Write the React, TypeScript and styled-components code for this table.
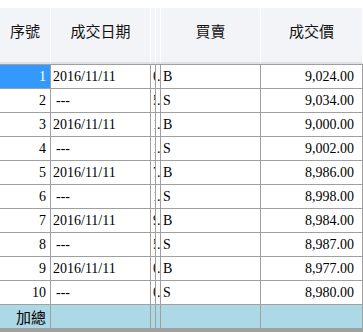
import { createGlobalStyle, styled } from 'styled-components'

const GlobalStyle = createGlobalStyle`
    html, body {
        margin: 0;
        padding: 0;
        background: #ffffff;
    }
    body {
        font-family: "Liberation Serif", "Noto Sans CJK TC", serif;
    }
`

const LINE = '#a0a0a0'
const widths = [51, 100, 5, 5, 100, 102]

const Grid = styled.div`
    width: 363px;
    height: 332px;
    overflow: hidden;
    background: #ffffff;
    border-bottom: 4px solid ${LINE};
    box-sizing: border-box;
`

const HeaderRow = styled.div`
    display: flex;
    height: 65px;
    box-sizing: border-box;
    border-bottom: 1px solid ${LINE};
`

const HeaderCell = styled.div<{ $w: number }>`
    width: ${p => p.$w}px;
    flex: none;
    box-sizing: border-box;
    height: 64px;
    padding-bottom: 2px;
    border-right: 1px solid #ffffff;
    border-bottom: 2px solid #dfe1e5;
    background: linear-gradient(#ffffff 0 8px, #f3f4f7 8px);
    display: flex;
    align-items: center;
    justify-content: center;
    font-family: "Noto Sans CJK TC", "Noto Sans", sans-serif;
    font-size: 15px;
    color: #111111;
    overflow: hidden;
    white-space: nowrap;
`

const Row = styled.div<{ $total?: boolean }>`
    display: flex;
    height: 24px;
    box-sizing: border-box;
    border-bottom: 1px solid ${LINE};
    background: ${p => (p.$total ? '#add8e6' : '#ffffff')};
    &:last-child {
        height: 23px;
        border-bottom: none;
    }
`

const Cell = styled.div<{ $w: number; $align?: 'left' | 'right'; $pad?: number; $selected?: boolean; $cjk?: boolean }>`
    width: ${p => p.$w}px;
    flex: none;
    box-sizing: border-box;
    border-right: 1px solid ${LINE};
    display: flex;
    align-items: center;
    justify-content: ${p => (p.$align === 'right' ? 'flex-end' : 'flex-start')};
    padding: ${p => (p.$align === 'right' ? `0 ${p.$pad ?? 4}px 0 0` : `0 0 0 ${p.$pad ?? 2}px`)};
    overflow: hidden;
    white-space: pre;
    font-family: ${p => (p.$cjk ? '"Noto Sans CJK TC", "Noto Sans", sans-serif' : '"Liberation Serif", "Noto Sans CJK TC", serif')};
    font-size: ${p => (p.$cjk ? 15 : 14)}px;
    color: ${p => (p.$selected ? '#ffffff' : '#000000')};
    background: ${p => (p.$selected ? '#3399ff' : 'transparent')};
`

const headers = ['序號', '成交日期', '', '', '買賣', '成交價']

const prices = ['9,024.00', '9,034.00', '9,000.00', '9,002.00', '8,986.00', '8,998.00', '8,984.00', '8,987.00', '8,977.00', '8,980.00']
const hours = ['0', '5', '1', '1', '7', '1', '9', '5', '0', '0']

const rows = prices.map((price, i) => ({
    no: i + 1,
    date: i % 2 === 0 ? '2016/11/11' : '---',
    hour: hours[i],
    side: i % 2 === 0 ? 'B' : 'S',
    price,
}))

const App = () => {
    return (
        <>
            <GlobalStyle />
            <Grid>
                <HeaderRow>
                    {headers.map((h, i) => (
                        <HeaderCell key={i} $w={widths[i]}>{h}</HeaderCell>
                    ))}
                </HeaderRow>

                {rows.map((r, i) => (
                    <Row key={r.no}>
                        <Cell $w={widths[0]} $align="right" $pad={4} $selected={i === 0}>{r.no}</Cell>
                        <Cell $w={widths[1]} $pad={r.date === '---' ? 5 : 2}>{r.date}</Cell>
                        <Cell $w={widths[2]} $pad={2}>{r.hour}</Cell>
                        <Cell $w={widths[3]} $pad={1}>.</Cell>
                        <Cell $w={widths[4]} $pad={2}>{r.side}</Cell>
                        <Cell $w={widths[5]} $align="right" $pad={8}>{r.price}</Cell>
                    </Row>
                ))}

                <Row $total>
                    <Cell $w={widths[0]} $align="right" $pad={4} $cjk>加總</Cell>
                    <Cell $w={widths[1]} />
                    <Cell $w={widths[2]} />
                    <Cell $w={widths[3]} />
                    <Cell $w={widths[4]} />
                    <Cell $w={widths[5]} />
                </Row>
            </Grid>
        </>
    )
}

export default App
